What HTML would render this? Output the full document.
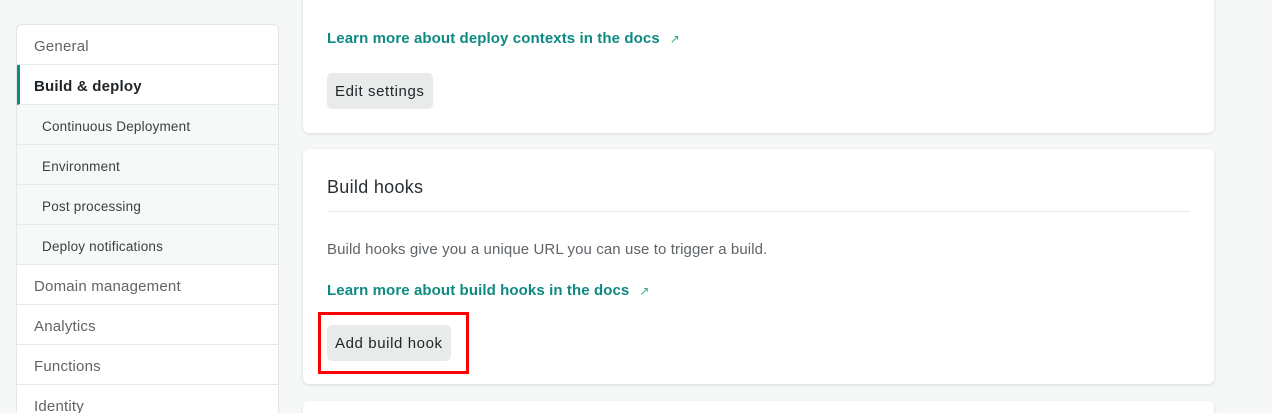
<!DOCTYPE html><html><head><style>
html,body{margin:0;width:1272px;height:413px;overflow:hidden}
body{background:#f6f8f8;font-family:"Liberation Sans",sans-serif;position:relative}
.sb{position:absolute;left:16px;top:24px;width:261px;border:1px solid #e3e6e6;border-radius:6px;background:#fff;overflow:hidden}
.sb div{height:39px;border-bottom:1px solid #e6e9e9;line-height:43px;padding-left:17px;font-size:15px;color:#5f6468;letter-spacing:.2px}
.sb .a{font-weight:bold;color:#1f2428;border-left:3px solid #0f8a84;padding-left:14px}
.sb .s{background:#f7f8f8;padding-left:25px;font-size:13.5px;color:#3a3f43}
.card{position:absolute;left:303px;width:911px;background:#fff;border-radius:6px;box-shadow:0 1px 3px rgba(0,0,0,.12)}
.lnk{position:absolute;left:24px;font-weight:bold;color:#0e8a83;font-size:15px;letter-spacing:.1px}
.lnk span{font-weight:normal;font-size:12px;color:#3a8;margin-left:10px}
.btn{position:absolute;left:24px;height:36px;line-height:38px;background:#e9eaea;border-radius:5px;padding:0 8px;font-size:15px;color:#1f2428;letter-spacing:.6px}
</style></head><body>
<div class="sb">
<div>General</div><div class="a">Build &amp; deploy</div><div class="s">Continuous Deployment</div><div class="s">Environment</div><div class="s">Post processing</div><div class="s">Deploy notifications</div><div>Domain management</div><div>Analytics</div><div>Functions</div><div>Identity</div></div>
<div class="card" style="top:-10px;height:143px">
<div class="lnk" style="top:40px">Learn more about deploy contexts in the docs<span>↗</span></div>
<div class="btn" style="top:83px">Edit settings</div></div>
<div class="card" style="top:149px;height:235px">
<div style="position:absolute;left:24px;top:28px;font-size:18px;color:#2a2f33;letter-spacing:.3px">Build hooks</div>
<div style="position:absolute;left:24px;right:24px;top:62px;border-top:1px solid #e6e9e9"></div>
<div style="position:absolute;left:24px;top:92px;font-size:15px;color:#5f6468;letter-spacing:.1px">Build hooks give you a unique URL you can use to trigger a build.</div>
<div class="lnk" style="top:133px">Learn more about build hooks in the docs<span>↗</span></div>
<div class="btn" style="top:176px">Add build hook</div></div>
<div style="position:absolute;left:318px;top:312px;width:145px;height:56px;border:3px solid #f00"></div>
<div class="card" style="top:401px;height:40px"></div>
</body></html>
